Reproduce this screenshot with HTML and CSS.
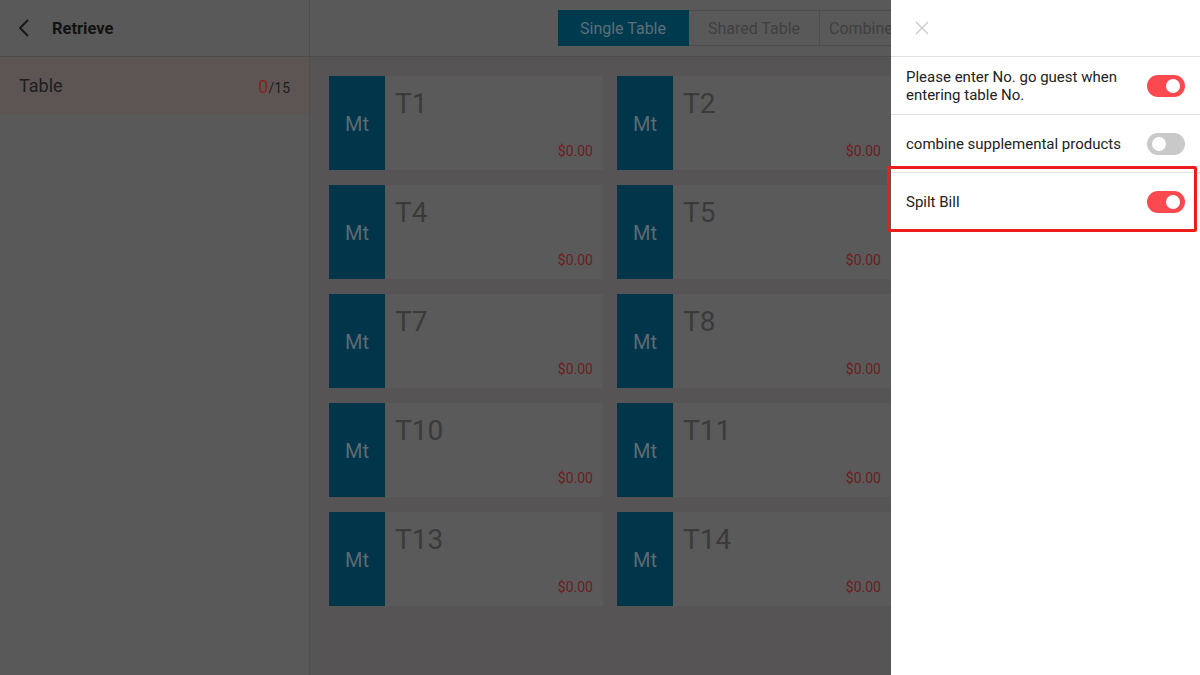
FILE: index.html
```html
<!DOCTYPE html>
<html>
<head>
<meta charset="utf-8">
<link rel="stylesheet" href="styles.css">
</head>
<body>
<div class="app">
  <aside class="sidebar">
    <div class="side-head">
      <svg class="back" width="12" height="18" viewBox="0 0 12 18"><path d="M10 1 L2 9 L10 17" fill="none" stroke="#151515" stroke-width="1.8"/></svg>
      <span class="title">Retrieve</span>
    </div>
    <div class="side-row">
      <span class="row-label">Table</span>
      <span class="count"><span class="num">0</span>/15</span>
    </div>
  </aside>
  <main class="main">
    <div class="main-head">
      <div class="tabs">
        <div class="tab active">Single Table</div>
        <div class="tab">Shared Table</div>
        <div class="tab">Combined Table</div>
      </div>
    </div>
    <div class="grid">
      <div class="card"><div class="mt">Mt</div><div class="info"><div class="tname">T1</div><div class="price">$0.00</div></div></div>
      <div class="card"><div class="mt">Mt</div><div class="info"><div class="tname">T2</div><div class="price">$0.00</div></div></div>
      <div class="card"><div class="mt">Mt</div><div class="info"><div class="tname">T3</div><div class="price">$0.00</div></div></div>
      <div class="card"><div class="mt">Mt</div><div class="info"><div class="tname">T4</div><div class="price">$0.00</div></div></div>
      <div class="card"><div class="mt">Mt</div><div class="info"><div class="tname">T5</div><div class="price">$0.00</div></div></div>
      <div class="card"><div class="mt">Mt</div><div class="info"><div class="tname">T6</div><div class="price">$0.00</div></div></div>
      <div class="card"><div class="mt">Mt</div><div class="info"><div class="tname">T7</div><div class="price">$0.00</div></div></div>
      <div class="card"><div class="mt">Mt</div><div class="info"><div class="tname">T8</div><div class="price">$0.00</div></div></div>
      <div class="card"><div class="mt">Mt</div><div class="info"><div class="tname">T9</div><div class="price">$0.00</div></div></div>
      <div class="card"><div class="mt">Mt</div><div class="info"><div class="tname">T10</div><div class="price">$0.00</div></div></div>
      <div class="card"><div class="mt">Mt</div><div class="info"><div class="tname">T11</div><div class="price">$0.00</div></div></div>
      <div class="card"><div class="mt">Mt</div><div class="info"><div class="tname">T12</div><div class="price">$0.00</div></div></div>
      <div class="card"><div class="mt">Mt</div><div class="info"><div class="tname">T13</div><div class="price">$0.00</div></div></div>
      <div class="card"><div class="mt">Mt</div><div class="info"><div class="tname">T14</div><div class="price">$0.00</div></div></div>
      <div class="card"><div class="mt">Mt</div><div class="info"><div class="tname">T15</div><div class="price">$0.00</div></div></div>
    </div>
  </main>
  <section class="drawer">
    <div class="drawer-head">
      <svg width="14" height="14" viewBox="0 0 14 14"><path d="M1 1 L13 13 M13 1 L1 13" stroke="#c9c9c9" stroke-width="1.4" fill="none"/></svg>
    </div>
    <div class="opt">
      <span class="opt-text">Please enter No. go guest when entering table No.</span>
      <span class="toggle on"></span>
    </div>
    <div class="opt">
      <span class="opt-text">combine supplemental products</span>
      <span class="toggle"></span>
    </div>
    <div class="opt highlight">
      <span class="opt-text">Spilt Bill</span>
      <span class="toggle on"></span>
    </div>
  </section>
</div>
</body>
</html>
```

FILE: styles.css
```css
*, *::before, *::after { box-sizing: border-box; }
html, body { margin: 0; padding: 0; }
body {
  width: 1200px;
  height: 675px;
  overflow: hidden;
  font-family: Roboto, "Noto Sans", "Liberation Sans", sans-serif;
  background: #565454;
}
.app {
  position: relative;
  display: flex;
  width: 1200px;
  height: 675px;
}
.sidebar {
  width: 310px;
  flex: none;
  background: #595959;
  border-right: 1px solid #4e4e4e;
}
.side-head {
  height: 57px;
  display: flex;
  align-items: center;
  padding-left: 18px;
  border-bottom: 1px solid #4b4b4b;
}
.back { margin-right: 22px; }
.title {
  font-weight: 700;
  font-size: 16.5px;
  color: #121212;
}
.side-row {
  height: 57px;
  background: #5c5554;
  display: flex;
  align-items: center;
  justify-content: space-between;
  padding: 0 19px 0 19px;
}
.row-label { font-size: 18px; color: #1d1d1d; }
.count { font-size: 14px; color: #1d1d1d; padding-top: 2px; }
.num { font-size: 18px; color: #8a2222; }
.main {
  flex: 1;
  background: #565454;
  overflow: hidden;
}
.main-head {
  height: 57px;
  background: #595959;
  border-bottom: 1px solid #4b4b4b;
  display: flex;
  align-items: center;
  padding-left: 248px;
}
.tabs {
  display: flex;
  height: 36px;
}
.tab {
  height: 36px;
  border: 1px solid #4c4c4c;
  border-left: none;
  display: flex;
  align-items: center;
  justify-content: center;
  font-size: 16px;
  color: #404040;
  width: 131px;
  white-space: nowrap;
}
.tab.active {
  background: #003a4f;
  border-color: #003a4f;
  color: #5d6f77;
}
.tab:nth-child(3) { width: 150px; justify-content: flex-start; padding-left: 9px; }
.grid {
  display: grid;
  grid-template-columns: repeat(3, 274px);
  column-gap: 14px;
  row-gap: 15px;
  padding: 19px 0 0 19px;
}
.card {
  height: 94px;
  display: flex;
  background: #5a5a5a;
}
.mt {
  width: 56px;
  flex: none;
  background: #00354a;
  color: #5a6c74;
  font-size: 20px;
  display: flex;
  align-items: center;
  justify-content: center;
  padding-top: 2px;
}
.info {
  flex: 1;
  display: flex;
  flex-direction: column;
  justify-content: space-between;
  padding: 11px 10px 11px 10px;
}
.tname {
  font-size: 28px;
  color: #3a3a3a;
  line-height: 34px;
}
.price {
  align-self: flex-end;
  font-size: 14px;
  line-height: 16px;
  color: #6f1c1c;
}
.drawer {
  position: absolute;
  top: 0;
  right: 0;
  width: 309px;
  height: 675px;
  background: #ffffff;
}
.drawer-head {
  height: 57px;
  display: flex;
  align-items: center;
  padding-left: 24px;
  border-bottom: 1px solid #e3e3e3;
}
.opt {
  position: relative;
  display: flex;
  align-items: center;
  justify-content: space-between;
  height: 58px;
  padding: 0 15px 0 15px;
  border-bottom: 1px solid #e3e3e3;
}
.opt-text {
  font-size: 15px;
  line-height: 18px;
  color: #222;
  width: 225px;
}
.opt.highlight { border-bottom: none; }
.opt.highlight::after {
  content: "";
  position: absolute;
  left: -4px;
  top: -7px;
  width: 310px;
  height: 66px;
  border: 3px solid #ee1d1d;
  border-radius: 2px;
}
.toggle {
  position: relative;
  width: 38px;
  height: 22px;
  border-radius: 11px;
  background: #c9c9c9;
  flex: none;
}
.toggle::after {
  content: "";
  position: absolute;
  top: 4px;
  left: 5px;
  width: 14px;
  height: 14px;
  border-radius: 50%;
  background: #fff;
}
.toggle.on { background: #fb4a4f; }
.toggle.on::after { left: auto; right: 5px; }
```
